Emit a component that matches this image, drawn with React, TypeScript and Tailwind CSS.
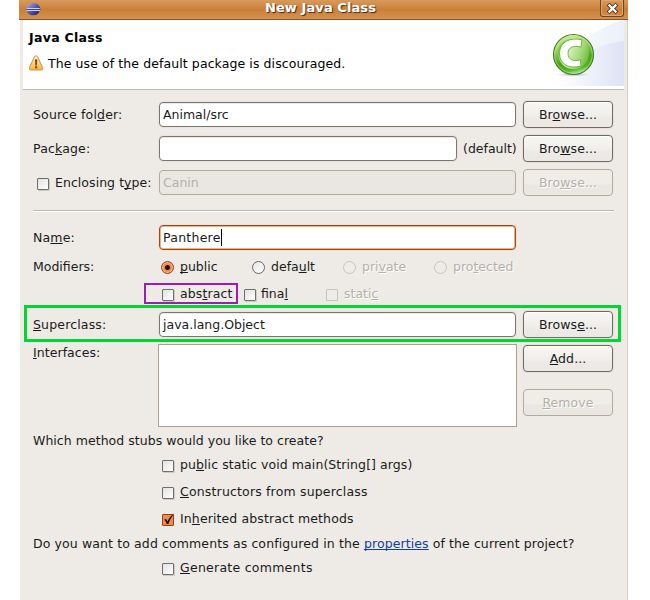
import React from "react";

/** Label text in which the letter after "&" is the underlined mnemonic. */
function T({ s, className = "" }: { s: string; className?: string }) {
  const i = s.indexOf("&");
  return (
    <span className={`block whitespace-pre leading-[15px] ${className}`}>
      {i < 0 ? (
        s
      ) : (
        <>
          {s.slice(0, i)}
          <span className="underline decoration-1 underline-offset-1 [text-decoration-skip-ink:none]">{s[i + 1]}</span>
          {s.slice(i + 2)}
        </>
      )}
    </span>
  );
}

const faded = "text-[#b5b0aa] [text-shadow:1px_1px_0_#fff]";

function Button({ s, disabled }: { s: string; disabled?: boolean }) {
  return (
    <button
      className={`flex h-[27px] w-[90px] shrink-0 items-center justify-center rounded-[4px] border ${
        disabled
          ? `border-[#b5a99c] bg-linear-to-b from-[#f0ece8] from-55% to-[#eae6e1] to-60% ${faded}`
          : "border-[#74695e] bg-linear-to-b from-[#f8f7f4] via-[#f0eeea] via-55% to-[#eeebe7] shadow-[0_0_0_1px_#e6e1db,inset_0_-10px_0_#e9e5e066,inset_0_1px_0_#fff]"
      }`}
    >
      <T s={s} className="tracking-[0.08px]" />
    </button>
  );
}

function Field({ s = "", kind = "normal", className = "w-[357px]" }: { s?: string; kind?: "normal" | "focus" | "disabled"; className?: string }) {
  const look = {
    normal: "border-[#80756b] bg-white shadow-[0_0_0_1px_#e8e4df,inset_0_1px_0_#ece9e6]",
    focus: "border-[#9c4a1b] bg-white tracking-[0.25px] shadow-[0_0_0_1px_#eae3dc,inset_0_0_0_1px_#f5b078]",
    disabled: "border-[#b5a99c] bg-[#eae7e2] text-[#b5b0aa]",
  }[kind];
  return (
    <div className={`flex h-[25px] shrink-0 items-center rounded-[4px] border pl-[3px] ${look} ${className}`}>
      <T s={s} />
      {kind === "focus" && <span className="h-[17px] w-px bg-black" />}
    </div>
  );
}

function Check({ checked, disabled }: { checked?: boolean; disabled?: boolean }) {
  const look = checked
    ? "border-[#8a4420] bg-[#f58a48]"
    : disabled
      ? "border-[#cdc3ba] bg-[#efebe7]"
      : "border-[#6e6e6e] bg-linear-to-br from-[#e2e2e2] to-white shadow-[1px_1px_0_#cfcac5]";
  return (
    <span className={`block size-3 shrink-0 rounded-[1px] border ${look}`}>
      {checked && (
        <svg viewBox="0 0 12 13" className="-mt-[2px] -ml-px h-[13px] w-3 overflow-visible">
          <path d="M2.2 6.6 4 6l1.6 2.6C6.8 5.500 9 2.600 12 .6 9.800 3.800 7.700 7 6.300 11H4.800C4.200 9.200 3.300 7.800 2.200 6.600Z" fill="#160b04" />
        </svg>
      )}
    </span>
  );
}

function Radio({ s, selected, disabled }: { s: string; selected?: boolean; disabled?: boolean }) {
  const look = selected
    ? "border-[#8c4a28] bg-[#f58a4e] shadow-[inset_0_0_0_1px_#f9b48c]"
    : disabled
      ? "border-[#cdc3ba] bg-[#efebe7]"
      : "border-[#686868] bg-linear-to-br from-[#e6e6e6] to-white";
  return (
    <div className="flex w-[91px] shrink-0">
      <span className={`mt-px flex size-[13px] shrink-0 items-center justify-center rounded-full border ${look}`}>
        {selected && <span className="size-[5px] rounded-full bg-[#20150e]" />}
      </span>
      <T s={s} className={`-mt-px ml-[6px] ${disabled ? faded : ""}`} />
    </div>
  );
}

function CheckLine({ s, checked, className = "" }: { s: string; checked?: boolean; className?: string }) {
  return (
    <div className={`ml-[129px] flex h-[15px] ${className}`}>
      <div className="pt-[3px]">
        <Check checked={checked} />
      </div>
      <T s={s} className="ml-[6px]" />
    </div>
  );
}

function EclipseLogo() {
  return (
    <svg className="mt-[2px] ml-[7px] h-[14px] w-[15px]" viewBox="0 0 15 14">
      <defs>
        <linearGradient id="ecl" x1="0" x2="1" y1="0" y2="1">
          <stop offset="0" stopColor="#c4b4dc" />
          <stop offset=".5" stopColor="#5e58a6" />
          <stop offset="1" stopColor="#191554" />
        </linearGradient>
      </defs>
      <ellipse cx="7.200" cy="7" rx="7" ry="6.300" fill="url(#ecl)" />
      <path d="M.8 6.500h13M.5 8.500h13.500" stroke="#bcd5f2" />
      <path d="M.5 7.500h14" stroke="#453f8c" />
    </svg>
  );
}

function WarningIcon() {
  return (
    <svg className="h-[16px] w-[15px]" viewBox="0 0 15 16">
      <defs>
        <linearGradient id="wrn" x1="0" x2="0" y1="0" y2="1">
          <stop offset="0" stopColor="#fff1c8" />
          <stop offset="1" stopColor="#fbb530" />
        </linearGradient>
      </defs>
      <path d="M5.500 1.600q1.500-1.800 3 0l5 10.800q1 2.500-1 2.600h-11Q-.5 14.900.5 12.400Z" fill="url(#wrn)" stroke="#ca8f50" />
      <path d="M6 4.500h2.200l-.3 6H6.300Z" fill="#7a4415" />
      <rect x="6" y="11.300" width="2.200" height="2" fill="#7a4415" />
    </svg>
  );
}

function ClassBanner() {
  return (
    <svg className="h-[66px] w-[75px]" viewBox="549 20 75 66">
      <defs>
        <linearGradient id="sky" x1="0" x2="1" y1="0" y2="0">
          <stop offset="0" stopColor="#fff" />
          <stop offset="1" stopColor="#dce3f5" />
        </linearGradient>
        <linearGradient id="sky2" x1="0" x2="1" y1="0" y2="0">
          <stop offset="0" stopColor="#fff" />
          <stop offset="1" stopColor="#eaf0fa" />
        </linearGradient>
        <linearGradient id="ball" x1=".35" x2=".6" y1="0" y2="1">
          <stop offset="0" stopColor="#d0f09c" />
          <stop offset=".3" stopColor="#9ad860" />
          <stop offset=".65" stopColor="#46a414" />
          <stop offset=".85" stopColor="#4fb822" />
          <stop offset="1" stopColor="#b4ecc0" />
        </linearGradient>
        <linearGradient id="core" x1="0" x2="1" y1=".3" y2=".7">
          <stop offset="0" stopColor="#6fbb3e" />
          <stop offset=".35" stopColor="#d4efbc" />
          <stop offset=".7" stopColor="#a3d878" />
          <stop offset="1" stopColor="#6ab83c" />
        </linearGradient>
        <radialGradient id="shade">
          <stop offset="0" stopColor="#8d88a0" />
          <stop offset="1" stopColor="#fff" stopOpacity="0" />
        </radialGradient>
      </defs>
      <path d="M549 86C562 54 590 29 624 20v66Z" fill="url(#sky2)" />
      <path d="M557 86C570 58 594 44 624 41v45Z" fill="url(#sky)" />
      <ellipse cx="573.500" cy="74.500" rx="20" ry="2.500" fill="url(#shade)" />
      <circle cx="573.500" cy="54.500" r="20" fill="url(#ball)" stroke="#4f7a35" strokeWidth="1.200" />
      <circle cx="573.500" cy="54.500" r="18.800" fill="none" stroke="#c6ee8c" strokeWidth=".8" opacity=".7" />
      <circle cx="573.500" cy="53.500" r="15.500" fill="url(#core)" />
      <path
        d="M582 39.800 580.900 47.200C574 45 568 47 568 53.500C568 60 574 61.800 580.300 59.800L581 66C569.500 69.400 559.500 64.500 559.500 53.500C559.500 42 570 37 582 39.800Z"
        fill="#fcfefa"
        stroke="#69ac3e"
        strokeWidth=".9"
      />
    </svg>
  );
}

const label = "w-[126px] shrink-0 tracking-[0.16px]";

export default function App() {
  return (
    <div className="h-[600px] w-[650px] overflow-hidden bg-white pl-[19px] font-['DejaVu_Sans',sans-serif] text-[12.5px] text-[#1a1a1a]">
      <header className="flex h-5 w-[609px] border-b border-[#8a5227] bg-linear-to-b from-[#d99a5c] via-[#cb8039] via-50% to-[#d5914f]">
        <EclipseLogo />
        <h1 className="ml-[224px] w-[335px] text-[13px] leading-[15px] font-bold tracking-[0.08px] whitespace-pre text-white [text-shadow:1px_1px_1px_#402b1b]">New Java Class</h1>
        <div className="flex h-[17px] w-6 items-center justify-center rounded-b-[3px] border border-t-0 border-[#704622] shadow-[inset_0_0_0_1px_#dda66f]">
          <svg className="h-[11px] w-[11px] overflow-visible" viewBox="0 0 11 11">
            <path d="m2.500 2.500 6 6m0-6-6 6" stroke="#4a311f" strokeWidth="4" strokeLinecap="square" />
            <path d="m2.500 2.500 6 6m0-6-6 6" stroke="#fff" strokeWidth="2.300" strokeLinecap="square" />
          </svg>
        </div>
      </header>

      <main className="ml-px h-[580px] w-[608px] border-r border-[#d6cdc5] bg-[#eeebe6]">
        <section className="ml-[3px] flex h-[70px] w-[601px] justify-between border-b border-[#bbb8b5] bg-white">
          <div className="pt-[10px] pl-[6px] text-black">
            <T s="Java Class" className="font-bold tracking-[0.3px]" />
            <div className="mt-[10px] flex">
              <WarningIcon />
              <T s="The use of the default package is discouraged." className="ml-1 pt-px tracking-[0.09px]" />
            </div>
          </div>
          <ClassBanner />
        </section>

        <div className="flex flex-col pt-2 pl-[13px]">
          <div className="flex h-[33px] items-center">
            <T s="Source fol&der:" className={label} />
            <Field s="Animal/src" />
            <div className="w-[7px]" />
            <Button s="Br&owse..." />
          </div>
          <div className="mt-px flex h-[33px] items-center">
            <T s="Pac&kage:" className={label} />
            <Field className="w-[298px]" />
            <T s="(default)" className="w-[66px] pl-[6px]" />
            <Button s="Bro&wse..." />
          </div>
          <div className="mt-px flex h-[33px] items-center">
            <div className="flex w-[126px] shrink-0 pl-1">
              <div className="pt-[2px]">
                <Check />
              </div>
              <T s="Enclosing t&ype:" className="-mt-px ml-[6px] tracking-[0.05px]" />
            </div>
            <Field s="Canin" kind="disabled" />
            <div className="w-[7px]" />
            <Button s="Bro&wse..." disabled />
          </div>

          <div className="mt-[11px] h-[2px] w-[581px] border-b border-white bg-[#bcb8b4]" />

          <div className="mt-[9px] flex h-[33px] items-center">
            <T s="Na&me:" className={label} />
            <Field s="Panthere" kind="focus" />
          </div>

          <div className="flex h-[27px] pt-[6px]">
            <T s="Modifiers:" className="-mt-px w-[128px] shrink-0" />
            <Radio s="&public" selected />
            <Radio s="defa&ult" />
            <Radio s="pri&vate" disabled />
            <Radio s="pro&tected" disabled />
          </div>

          <div className="flex h-6 pt-[2px]">
            <div className="ml-[111px] flex h-[21px] w-[94px] shrink-0 border-2 border-[#9b1fae] pl-4">
              <div className="pt-1">
                <Check />
              </div>
              <T s="abs&tract" className="ml-[6px] pt-px tracking-[0.12px]" />
            </div>
            <div className="flex w-[82px] shrink-0 pt-[3px] pl-[6px]">
              <div className="pt-[3px]">
                <Check />
              </div>
              <T s="fina&l" className="ml-[5px]" />
            </div>
            <div className="flex pt-[3px] pl-[6px]">
              <div className="pt-[3px]">
                <Check disabled />
              </div>
              <T s="stati&c" className={`ml-[6px] ${faded}`} />
            </div>
          </div>

          <div className="-ml-[9px] flex h-[37px] w-[597px] items-center border-[3px] border-[#04d535] pt-px pl-[6px]">
            <T s="&Superclass:" className={label} />
            <Field s="java.lang.Object" />
            <div className="w-[7px]" />
            <Button s="Brows&e..." />
          </div>

          <div className="mt-[2px] flex h-[83px]">
            <T s="&Interfaces:" className="w-[125px] shrink-0 pt-[1px] tracking-[0.06px]" />
            <div className="h-[83px] w-[359px] border border-[#b0a18e] bg-white" />
            <div className="ml-[6px] flex flex-col gap-[17px] pt-px">
              <Button s="&Add..." />
              <Button s="&Remove" disabled />
            </div>
          </div>

          <T s="Which method stubs would you like to create?" className="mt-[6px] tracking-[0.04px]" />
          <CheckLine s="pu&blic static void main(String[] args)" className="mt-[9px] tracking-[0.08px]" />
          <CheckLine s="&Constructors from superclass" className="mt-3 tracking-[0.17px]" />
          <CheckLine s="In&herited abstract methods" checked className="mt-3 tracking-[0.11px]" />
          <div className="mt-[10px] flex">
            <T s="Do you want to add comments as configured in the " className="tracking-[0.112px]" />
            <a className="leading-[15px] tracking-[0.1px] text-[#12409c] underline decoration-1 underline-offset-1 [text-decoration-skip-ink:none]">properties</a>
            <T s=" of the current project?" className="tracking-[0.09px]" />
          </div>
          <CheckLine s="&Generate comments" className="mt-[9px] tracking-[0.26px]" />
        </div>
      </main>
    </div>
  );
}
